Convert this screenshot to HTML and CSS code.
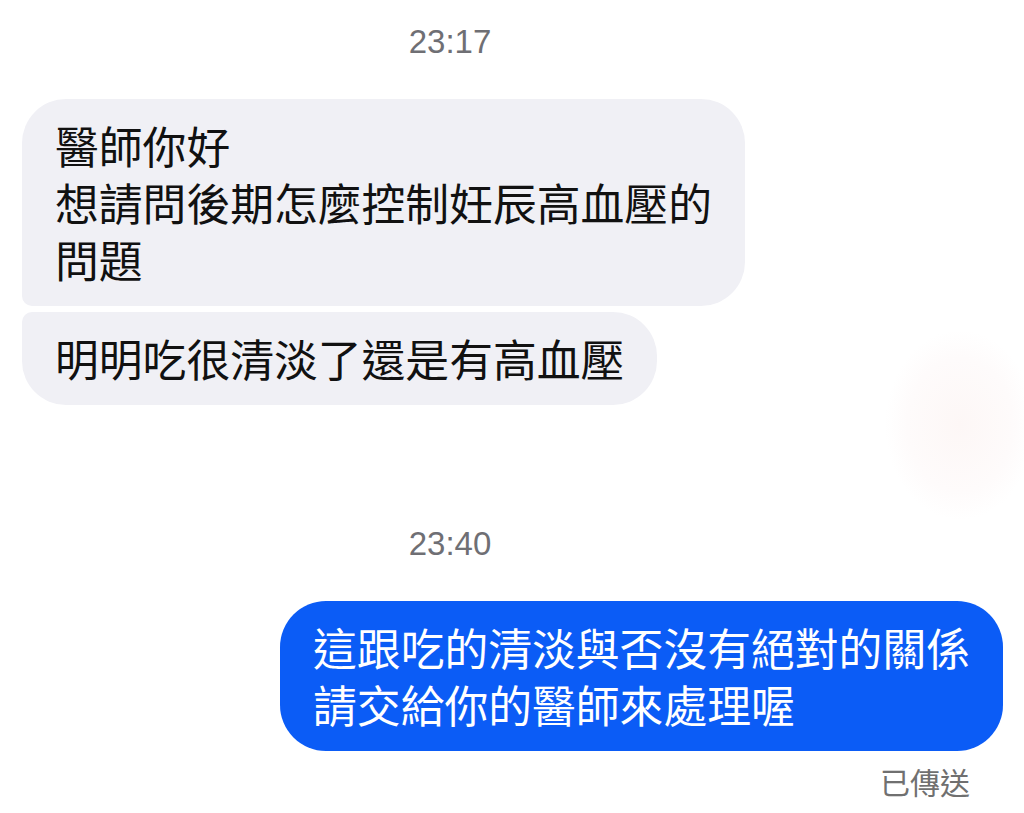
FILE: index.html
```html
<!DOCTYPE html>
<html>
  <head>
    <meta charset="utf-8" />
    <link rel="stylesheet" href="styles.css">
  </head>
  <body>
    <div class="chat">
      <div class="time first">23:17</div>

      <div class="group incoming">
        <div class="bubble top">醫師你好<br>想請問後期怎麼控制妊辰高血壓的<br>問題</div>
        <div class="bubble bottom">明明吃很清淡了還是有高血壓</div>
      </div>

      <div class="time second">23:40</div>

      <div class="group outgoing">
        <div class="bubble">這跟吃的清淡與否沒有絕對的關係<br>請交給你的醫師來處理喔</div>
        <div class="status">已傳送</div>
      </div>

      <div class="stain"></div>
    </div>
  </body>
</html>
```

FILE: styles.css
```css
body {
  margin: 0;
  background: #fff;
}
.chat {
  position: relative;
  width: 1024px;
  height: 813px;
  overflow: hidden;
  font-family: "Noto Sans CJK TC", "Noto Sans CJK SC", sans-serif;
}
.time {
  width: 900px;
  text-align: center;
  font-family: "Liberation Sans", Arial, sans-serif;
  font-size: 33px;
  line-height: 40px;
  color: #6f6f74;
}
.time.first {
  padding-top: 22px;
}
.time.second {
  margin-top: 119px;
}
.group {
  display: flex;
  flex-direction: column;
  gap: 6px;
  margin-top: 37px;
}
.bubble {
  font-size: 43.8px;
  line-height: 57px;
  padding: 18px 33px;
  border-radius: 44px;
  white-space: nowrap;
}
.incoming {
  align-items: flex-start;
  padding-left: 22px;
}
.incoming .bubble {
  background: #f0f0f5;
  color: #111;
}
.incoming .bubble.top {
  border-bottom-left-radius: 10px;
}
.incoming .bubble.bottom {
  border-top-left-radius: 10px;
}
.outgoing {
  align-items: flex-end;
  padding-right: 21px;
}
.outgoing .bubble {
  background: #0b5cf6;
  color: #fff;
  border-radius: 46px;
}
.status {
  margin-top: 6px;
  margin-right: 33px;
  font-size: 30px;
  line-height: 36px;
  color: #707070;
}
.stain {
  position: absolute;
  left: 885px;
  top: 330px;
  width: 150px;
  height: 190px;
  border-radius: 50%;
  background: radial-gradient(closest-side, #fdf7f6, #fefbfb 70%, rgba(255,255,255,0));
}
```
